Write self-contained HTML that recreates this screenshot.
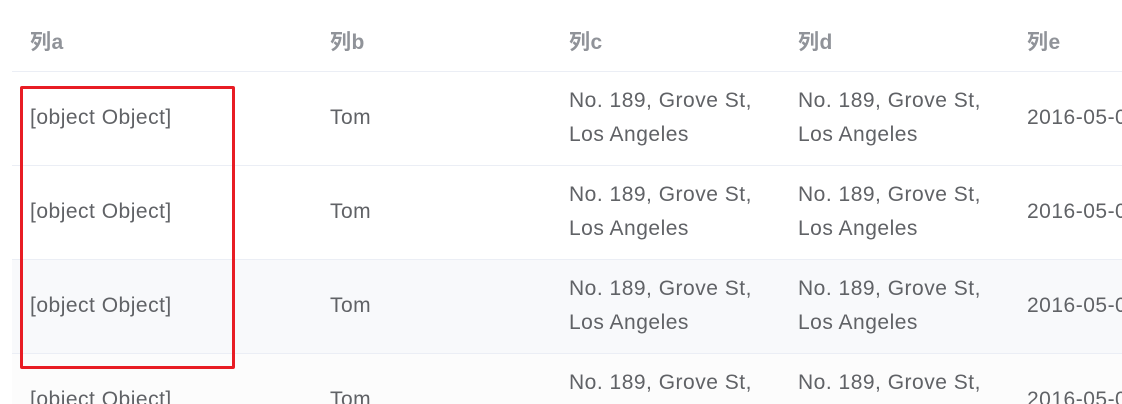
<!DOCTYPE html>
<html><head><meta charset="utf-8"><style>
html,body{margin:0;width:1122px;height:404px;overflow:hidden;background:#fff;font-family:"Liberation Sans","Noto Sans CJK SC",sans-serif;position:relative}
table{position:absolute;left:12px;top:0;border-collapse:collapse;table-layout:fixed;width:1200px}
td,th{padding:0 18px;text-align:left;border-bottom:1px solid #ebeef5;font-size:21px;letter-spacing:0.5px;color:#606266;line-height:34px;white-space:nowrap}
th{height:71px;box-sizing:border-box;padding-top:16px;color:#909399;font-weight:bold}
td{height:93px}
tr.s td{background:#f8f9fb}
tr.f td{background:#fcfcfc}
.box{position:absolute;left:20px;top:86px;width:209px;height:277px;border:3px solid #e81c24;border-radius:2px}
</style></head><body>
<table>
<colgroup><col style="width:300px"><col style="width:239px"><col style="width:229px"><col style="width:229px"><col style="width:203px"></colgroup>
<tr><th>列a</th><th>列b</th><th>列c</th><th>列d</th><th>列e</th></tr>
<tr><td>[object Object]</td><td>Tom</td><td>No. 189, Grove St,<br>Los Angeles</td><td>No. 189, Grove St,<br>Los Angeles</td><td>2016-05-03</td></tr>
<tr><td>[object Object]</td><td>Tom</td><td>No. 189, Grove St,<br>Los Angeles</td><td>No. 189, Grove St,<br>Los Angeles</td><td>2016-05-03</td></tr>
<tr class="s"><td>[object Object]</td><td>Tom</td><td>No. 189, Grove St,<br>Los Angeles</td><td>No. 189, Grove St,<br>Los Angeles</td><td>2016-05-03</td></tr>
<tr class="f"><td>[object Object]</td><td>Tom</td><td>No. 189, Grove St,<br>Los Angeles</td><td>No. 189, Grove St,<br>Los Angeles</td><td>2016-05-03</td></tr>
</table>
<div class="box"></div>
</body></html>
